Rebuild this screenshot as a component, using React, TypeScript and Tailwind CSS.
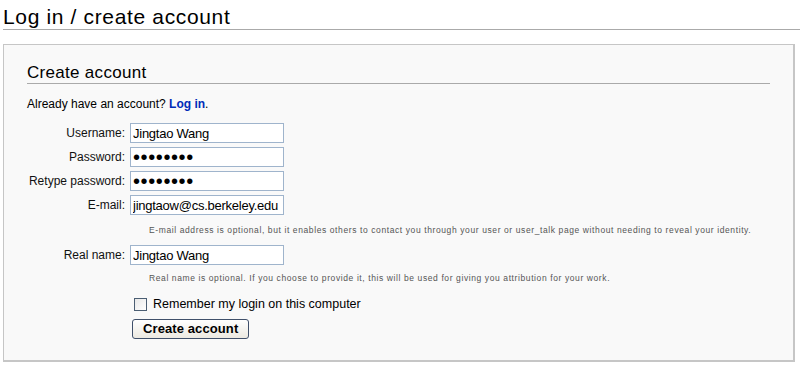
import React from "react";

const fields = [
  { label: "Username:", type: "text", value: "Jingtao Wang" },
  { label: "Password:", type: "password", value: "jingtaow" },
  { label: "Retype password:", type: "password", value: "jingtaow" },
  { label: "E-mail:", type: "text", value: "jingtaow@cs.berkeley.edu" },
];

function Field({ label, type, value, className = "" }: { label: string; type: string; value: string; className?: string }) {
  const isPw = type === "password";
  return (
    <div className={"flex items-center h-[20px] " + className}>
      <label className="w-[98px] text-right text-[12px] leading-[16px] text-[#111]">{label}</label>
      <input
        type={type}
        defaultValue={value}
        readOnly
        className={
          "ml-[5px] w-[154px] h-[20px] border border-[#9fb4cc] bg-white pl-[2px] pr-0 outline-none text-black " +
          (isPw ? "text-[20px] tracking-[0.6px]" : "text-[13px] tracking-[-0.25px]")
        }
      />
    </div>
  );
}

export default function App() {
  return (
    <div className="min-h-screen bg-white pl-[3px] font-['Liberation_Sans',Arial,sans-serif] text-black">
      <h1 className="text-[21px] leading-[24px] pt-[5px] tracking-[0.65px] font-normal border-b border-[#aaaaaa]">
        Log in / create account
      </h1>

      <div className="mt-[14px] mr-[5px] border border-[#c6c6c6] border-r-2 border-b-2 bg-[#f9f9f9] pt-[18px] px-[23px] pb-[20px]">
        <h2 className="text-[17px] leading-[20px] tracking-[0.3px] border-b border-[#aaaaaa]">Create account</h2>

        <p className="mt-[12px] text-[12px] leading-[16px]">
          Already have an account? <a className="font-bold text-[#002bb8] cursor-pointer">Log in</a>.
        </p>

        <div className="mt-[11px] flex flex-col gap-[4px]">
          {fields.map((f) => (
            <Field key={f.label} {...f} />
          ))}
        </div>

        <p className="mt-[9px] ml-[122px] text-[8.5px] leading-[12px] tracking-[0.6px] text-[#555]">
          E-mail address is optional, but it enables others to contact you through your user or user_talk page without
          needing to reveal your identity.
        </p>

        <Field label="Real name:" type="text" value="Jingtao Wang" className="mt-[9px]" />

        <p className="mt-[7px] ml-[122px] text-[8.5px] leading-[12px] tracking-[0.6px] text-[#555]">
          Real name is optional. If you choose to provide it, this will be used for giving you attribution for your work.
        </p>

        <label className="mt-[13px] ml-[107px] flex items-center h-[15px] text-[12.5px]">
          <span className="w-[13px] h-[13px] border border-[#4b5e73] bg-gradient-to-br from-[#e8e8e8] to-white" />
          <span className="ml-[6px]">Remember my login on this computer</span>
        </label>

        <button className="mt-[7px] ml-[105px] h-[20px] px-[10px] border border-[#40506a] rounded-[3px] bg-gradient-to-b from-white to-[#ece9e1] text-[13px] font-bold leading-[16px] tracking-[0.1px] text-black">
          Create account
        </button>
      </div>
    </div>
  );
}
